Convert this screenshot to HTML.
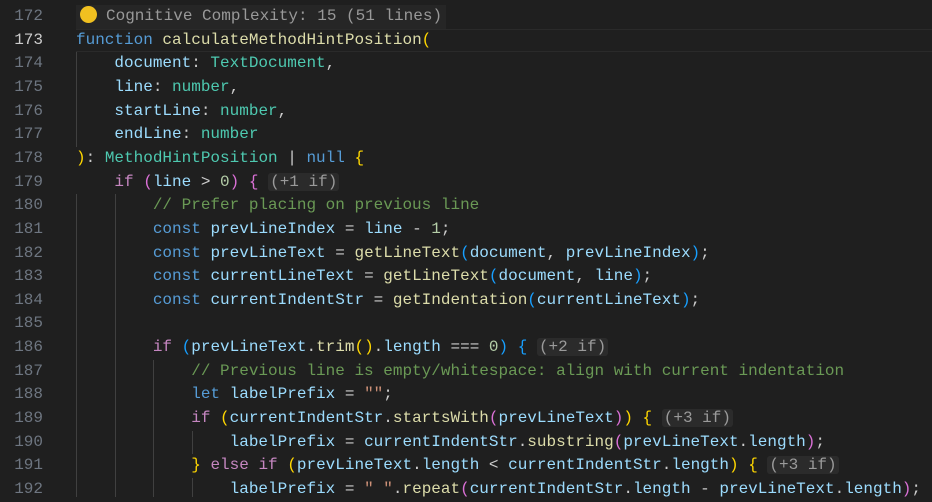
<!DOCTYPE html>
<html><head><meta charset="utf-8"><style>
body{margin:0;width:932px;height:497px;overflow:hidden;background:#1f1f1f;font-family:"Liberation Mono",monospace;font-size:16px;}
.l{position:absolute;left:0;width:932px;height:23.65px;line-height:23.65px;white-space:pre;}
.n{position:absolute;left:0;width:43px;text-align:right;color:#6e7681;}
.c{position:absolute;left:76px;color:#cccccc;}
.k{color:#569cd6}.p{color:#c586c0}.v{color:#9cdcfe}.f{color:#dcdcaa}.t{color:#4ec9b0}.nu{color:#b5cea8}.cm{color:#6a9955}.s{color:#ce9178}
.g{color:#ffd700}.m{color:#da70d6}.b{color:#179fff}
.h{background:#2b2b2b;color:#9a9a9a;border-radius:3px;padding:0 2px;}
.guide{position:absolute;width:1px;background:#404040;}
</style></head><body>
<div class="l" style="top:-18.65px"><span class="c"><span class="g">}</span></span></div>
<div class="l" style="top:5px"><span class="n">172</span><span class="c" style="background:#262626;color:#999;padding-right:4px"><span style="display:inline-block;width:17px;height:17px;border-radius:50%;background:#f0c020;vertical-align:-3px;margin:0 9px 0 4px"></span>Cognitive Complexity: 15 (51 lines)</span></div>
<div class="l" style="top:28.65px;box-sizing:border-box;border:1px solid #2a2a2a;border-left:none;border-right:none;left:76px;width:856px"></div>
<div class="l" style="top:28.65px"><span class="n" style="color:#cccccc">173</span><span class="c"><span class="k">function</span> <span class="f">calculateMethodHintPosition</span><span class="g">(</span></span></div>
<div class="l" style="top:52.3px"><span class="n">174</span><span class="c">    <span class="v">document</span>: <span class="t">TextDocument</span>,</span></div>
<div class="l" style="top:75.95px"><span class="n">175</span><span class="c">    <span class="v">line</span>: <span class="t">number</span>,</span></div>
<div class="l" style="top:99.6px"><span class="n">176</span><span class="c">    <span class="v">startLine</span>: <span class="t">number</span>,</span></div>
<div class="l" style="top:123.25px"><span class="n">177</span><span class="c">    <span class="v">endLine</span>: <span class="t">number</span></span></div>
<div class="l" style="top:146.9px"><span class="n">178</span><span class="c"><span class="g">)</span>: <span class="t">MethodHintPosition</span> | <span class="k">null</span> <span class="g">{</span></span></div>
<div class="l" style="top:170.55px"><span class="n">179</span><span class="c">    <span class="p">if</span> <span class="m">(</span><span class="v">line</span> &gt; <span class="nu">0</span><span class="m">)</span> <span class="m">{</span> <span class="h">(+1 if)</span></span></div>
<div class="l" style="top:194.2px"><span class="n">180</span><span class="c">        <span class="cm">// Prefer placing on previous line</span></span></div>
<div class="l" style="top:217.85px"><span class="n">181</span><span class="c">        <span class="k">const</span> <span class="v">prevLineIndex</span> = <span class="v">line</span> - <span class="nu">1</span>;</span></div>
<div class="l" style="top:241.5px"><span class="n">182</span><span class="c">        <span class="k">const</span> <span class="v">prevLineText</span> = <span class="f">getLineText</span><span class="b">(</span><span class="v">document</span>, <span class="v">prevLineIndex</span><span class="b">)</span>;</span></div>
<div class="l" style="top:265.15px"><span class="n">183</span><span class="c">        <span class="k">const</span> <span class="v">currentLineText</span> = <span class="f">getLineText</span><span class="b">(</span><span class="v">document</span>, <span class="v">line</span><span class="b">)</span>;</span></div>
<div class="l" style="top:288.8px"><span class="n">184</span><span class="c">        <span class="k">const</span> <span class="v">currentIndentStr</span> = <span class="f">getIndentation</span><span class="b">(</span><span class="v">currentLineText</span><span class="b">)</span>;</span></div>
<div class="l" style="top:312.45px"><span class="n">185</span></div>
<div class="l" style="top:336.1px"><span class="n">186</span><span class="c">        <span class="p">if</span> <span class="b">(</span><span class="v">prevLineText</span>.<span class="f">trim</span><span class="g">()</span>.<span class="v">length</span> === <span class="nu">0</span><span class="b">)</span> <span class="b">{</span> <span class="h">(+2 if)</span></span></div>
<div class="l" style="top:359.75px"><span class="n">187</span><span class="c">            <span class="cm">// Previous line is empty/whitespace: align with current indentation</span></span></div>
<div class="l" style="top:383.4px"><span class="n">188</span><span class="c">            <span class="k">let</span> <span class="v">labelPrefix</span> = <span class="s">""</span>;</span></div>
<div class="l" style="top:407.05px"><span class="n">189</span><span class="c">            <span class="p">if</span> <span class="g">(</span><span class="v">currentIndentStr</span>.<span class="f">startsWith</span><span class="m">(</span><span class="v">prevLineText</span><span class="m">)</span><span class="g">)</span> <span class="g">{</span> <span class="h">(+3 if)</span></span></div>
<div class="l" style="top:430.7px"><span class="n">190</span><span class="c">                <span class="v">labelPrefix</span> = <span class="v">currentIndentStr</span>.<span class="f">substring</span><span class="m">(</span><span class="v">prevLineText</span>.<span class="v">length</span><span class="m">)</span>;</span></div>
<div class="l" style="top:454.35px"><span class="n">191</span><span class="c">            <span class="g">}</span> <span class="p">else</span> <span class="p">if</span> <span class="g">(</span><span class="v">prevLineText</span>.<span class="v">length</span> &lt; <span class="v">currentIndentStr</span>.<span class="v">length</span><span class="g">)</span> <span class="g">{</span> <span class="h">(+3 if)</span></span></div>
<div class="l" style="top:478px"><span class="n">192</span><span class="c">                <span class="v">labelPrefix</span> = <span class="s">" "</span>.<span class="f">repeat</span><span class="m">(</span><span class="v">currentIndentStr</span>.<span class="v">length</span> - <span class="v">prevLineText</span>.<span class="v">length</span><span class="m">)</span>;</span></div>
<div class="guide" style="left:76px;top:52px;height:95px"></div>
<div class="guide" style="left:76px;top:194px;height:303px"></div>
<div class="guide" style="left:115px;top:194px;height:303px"></div>
<div class="guide" style="left:153px;top:360px;height:137px"></div>
<div class="guide" style="left:192px;top:431px;height:23px"></div>
<div class="guide" style="left:192px;top:478px;height:19px"></div>
</body></html>
